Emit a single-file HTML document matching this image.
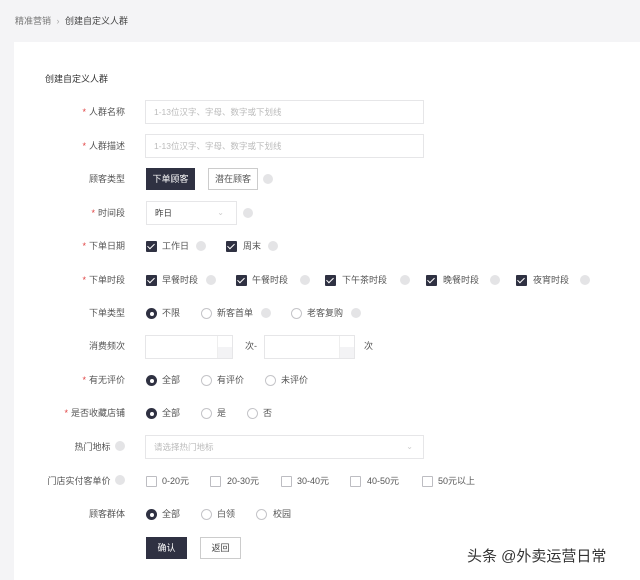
<!DOCTYPE html>
<html><head><meta charset="utf-8"><style>
*{margin:0;padding:0;box-sizing:border-box}
body{width:640px;height:580px;background:#f4f4f6;position:relative;overflow:hidden;font-family:"Liberation Sans","Noto Sans CJK SC",sans-serif;font-size:9px;color:#555}
.a{position:absolute;white-space:nowrap}
.card{position:absolute;left:14px;top:42px;width:626px;height:538px;background:#fff}
.lb{position:absolute;right:515px;white-space:nowrap;line-height:12px;color:#555}
.lb i{font-style:normal;color:#e04040;margin-right:3px}
.inp{position:absolute;border:1px solid #e6e6e8;background:#fff;color:#bbb;padding-left:8px;line-height:22px;font-size:8.5px}
.cb{position:absolute;width:11px;height:11px;background:#2f3142;border-radius:1px}
.cb:after{content:"";position:absolute;left:3px;top:1px;width:3px;height:6px;border:solid #fff;border-width:0 1.5px 1.5px 0;transform:rotate(45deg)}
.ce{position:absolute;width:11px;height:11px;border:1px solid #bdbdc2;border-radius:1px;background:#fff}
.rs{position:absolute;width:11px;height:11px;border-radius:50%;background:#2f3142}
.rs:after{content:"";position:absolute;left:3.5px;top:3.5px;width:4px;height:4px;border-radius:50%;background:#fff}
.re{position:absolute;width:11px;height:11px;border-radius:50%;border:1px solid #c4c4c8;background:#fff}
.h{position:absolute;width:10px;height:10px;border-radius:50%;background:#e4e4e6}
.t{position:absolute;line-height:12px;color:#555;white-space:nowrap}
</style></head><body>
<div class="a" style="left:15px;top:14px;color:#777">精准营销 <span style="color:#aaa;margin:0 3px">›</span> <span style="color:#444">创建自定义人群</span></div>
<div class="card"></div>
<div class="a" style="left:45px;top:72px;color:#333">创建自定义人群</div>

<div class="lb" style="top:106px"><i>*</i>人群名称</div>
<div class="inp" style="left:145px;top:100px;width:279px;height:24px">1-13位汉字、字母、数字或下划线</div>
<div class="lb" style="top:140px"><i>*</i>人群描述</div>
<div class="inp" style="left:145px;top:134px;width:279px;height:24px">1-13位汉字、字母、数字或下划线</div>

<div class="lb" style="top:173px">顾客类型</div>
<div class="a" style="left:146px;top:168px;width:49px;height:22px;background:#2f3142;color:#fff;text-align:center;line-height:22px">下单顾客</div>
<div class="a" style="left:208px;top:168px;width:50px;height:22px;border:1px solid #ccc;color:#555;text-align:center;line-height:20px">潜在顾客</div>
<div class="h" style="left:263px;top:174px"></div>

<div class="lb" style="top:207px"><i>*</i>时间段</div>
<div class="inp" style="left:146px;top:201px;width:91px;height:24px;color:#444">昨日<span style="position:absolute;right:12px;color:#ccc;font-size:8px">⌄</span></div>
<div class="h" style="left:243px;top:208px"></div>

<div class="lb" style="top:240px"><i>*</i>下单日期</div>
<div class="cb" style="left:146px;top:241px"></div><div class="t" style="left:162px;top:240px">工作日</div><div class="h" style="left:196px;top:241px"></div>
<div class="cb" style="left:226px;top:241px"></div><div class="t" style="left:243px;top:240px">周末</div><div class="h" style="left:268px;top:241px"></div>

<div class="lb" style="top:274px"><i>*</i>下单时段</div>
<div class="cb" style="left:146px;top:275px"></div><div class="t" style="left:162px;top:274px">早餐时段</div><div class="h" style="left:206px;top:275px"></div>
<div class="cb" style="left:236px;top:275px"></div><div class="t" style="left:252px;top:274px">午餐时段</div><div class="h" style="left:300px;top:275px"></div>
<div class="cb" style="left:325px;top:275px"></div><div class="t" style="left:342px;top:274px">下午茶时段</div><div class="h" style="left:400px;top:275px"></div>
<div class="cb" style="left:426px;top:275px"></div><div class="t" style="left:443px;top:274px">晚餐时段</div><div class="h" style="left:490px;top:275px"></div>
<div class="cb" style="left:516px;top:275px"></div><div class="t" style="left:533px;top:274px">夜宵时段</div><div class="h" style="left:580px;top:275px"></div>

<div class="lb" style="top:307px">下单类型</div>
<div class="rs" style="left:146px;top:308px"></div><div class="t" style="left:162px;top:307px">不限</div>
<div class="re" style="left:201px;top:308px"></div><div class="t" style="left:217px;top:307px">新客首单</div><div class="h" style="left:261px;top:308px"></div>
<div class="re" style="left:291px;top:308px"></div><div class="t" style="left:307px;top:307px">老客复购</div><div class="h" style="left:351px;top:308px"></div>

<div class="lb" style="top:340px">消费频次</div>
<div class="inp" style="left:145px;top:335px;width:88px;height:24px"><span style="position:absolute;right:0;top:0;width:15px;height:22px;border-left:1px solid #eee;background:linear-gradient(#fff 50%,#f3f3f5 50%)"></span></div>
<div class="t" style="left:245px;top:340px">次-</div>
<div class="inp" style="left:264px;top:335px;width:91px;height:24px"><span style="position:absolute;right:0;top:0;width:15px;height:22px;border-left:1px solid #eee;background:linear-gradient(#fff 50%,#f3f3f5 50%)"></span></div>
<div class="t" style="left:364px;top:340px">次</div>

<div class="lb" style="top:374px"><i>*</i>有无评价</div>
<div class="rs" style="left:146px;top:375px"></div><div class="t" style="left:162px;top:374px">全部</div>
<div class="re" style="left:201px;top:375px"></div><div class="t" style="left:217px;top:374px">有评价</div>
<div class="re" style="left:265px;top:375px"></div><div class="t" style="left:281px;top:374px">未评价</div>

<div class="lb" style="top:407px"><i>*</i>是否收藏店铺</div>
<div class="rs" style="left:146px;top:408px"></div><div class="t" style="left:162px;top:407px">全部</div>
<div class="re" style="left:201px;top:408px"></div><div class="t" style="left:217px;top:407px">是</div>
<div class="re" style="left:247px;top:408px"></div><div class="t" style="left:263px;top:407px">否</div>

<div class="lb" style="top:441px">热门地标 <span style="display:inline-block;width:10px;height:10px;border-radius:50%;background:#e4e4e6;vertical-align:-1px;margin-left:2px"></span></div>
<div class="inp" style="left:145px;top:435px;width:279px;height:24px">请选择热门地标<span style="position:absolute;right:10px;color:#ccc;font-size:8px">⌄</span></div>

<div class="lb" style="top:475px">门店实付客单价 <span style="display:inline-block;width:10px;height:10px;border-radius:50%;background:#e4e4e6;vertical-align:-1px;margin-left:2px"></span></div>
<div class="ce" style="left:146px;top:476px"></div><div class="t" style="left:162px;top:475px">0-20元</div>
<div class="ce" style="left:210px;top:476px"></div><div class="t" style="left:227px;top:475px">20-30元</div>
<div class="ce" style="left:281px;top:476px"></div><div class="t" style="left:297px;top:475px">30-40元</div>
<div class="ce" style="left:350px;top:476px"></div><div class="t" style="left:367px;top:475px">40-50元</div>
<div class="ce" style="left:422px;top:476px"></div><div class="t" style="left:438px;top:475px">50元以上</div>

<div class="lb" style="top:508px">顾客群体</div>
<div class="rs" style="left:146px;top:509px"></div><div class="t" style="left:162px;top:508px">全部</div>
<div class="re" style="left:201px;top:509px"></div><div class="t" style="left:217px;top:508px">白领</div>
<div class="re" style="left:256px;top:509px"></div><div class="t" style="left:273px;top:508px">校园</div>

<div class="a" style="left:146px;top:537px;width:41px;height:22px;background:#2f3142;color:#fff;text-align:center;line-height:22px">确认</div>
<div class="a" style="left:200px;top:537px;width:41px;height:22px;border:1px solid #ccc;text-align:center;line-height:20px;color:#444">返回</div>

<div class="a" style="left:467px;top:545px;font-size:15px;color:#333;text-shadow:0 0 2px #fff">头条 @外卖运营日常</div>
</body></html>
